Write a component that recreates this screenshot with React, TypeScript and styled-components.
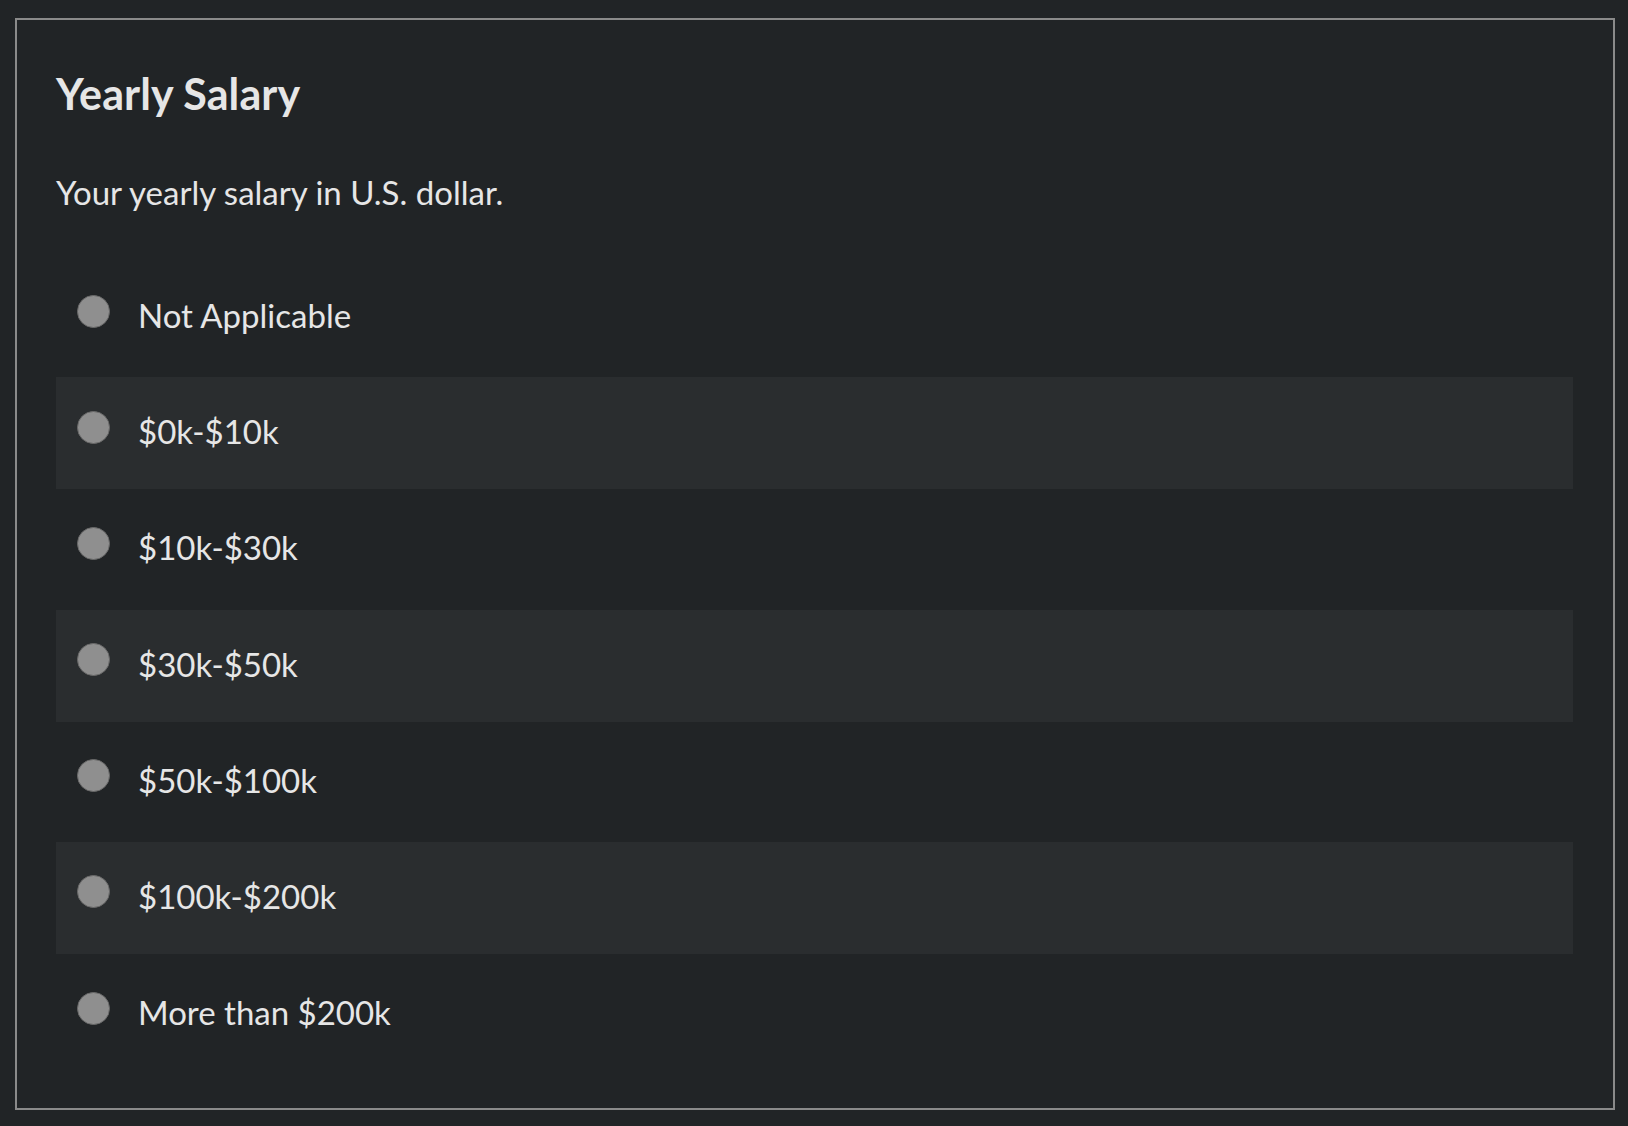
import React, { useState } from 'react';
import styled, { createGlobalStyle } from 'styled-components';

const color = {
  page: '#212426',
  rowAlt: '#2a2d2f',
  frame: '#8a8a8a',
  text: '#e6e6e6',
  radio: '#8f8f8f',
  radioEdge: '#6a6a6a',
};

const GlobalStyle = createGlobalStyle`
  html, body {
    margin: 0;
    padding: 0;
    background-color: ${color.page};
  }
  body {
    font-family: Lato, "Open Sans", "Noto Sans", sans-serif;
    color: ${color.text};
  }
`;

const Page = styled.div`
  padding: 18px 13px 16px 15px;
`;

const Frame = styled.fieldset`
  margin: 0;
  box-sizing: border-box;
  width: 1600px;
  min-height: 1092px;
  border: solid 2px ${color.frame};
  padding: 50px 40px 38px 39px;
`;

const Title = styled.h2`
  margin: 0;
  font-size: 43px;
  font-weight: 700;
  line-height: 48px;
  letter-spacing: 0.1px;
  color: ${color.text};
`;

const Description = styled.p`
  margin: 55px 0 0;
  font-size: 33px;
  font-weight: 400;
  line-height: 38px;
  color: ${color.text};
`;

const OptionList = styled.div`
  display: flex;
  flex-direction: column;
  gap: 4.2px;
  margin-top: 50px;
`;

type OptionRowProps = {
  striped?: boolean;
};

const OptionRow = styled.label<OptionRowProps>`
  display: flex;
  align-items: center;
  height: 112px;
  padding-left: 21px;
  cursor: pointer;
  background-color: ${(props) => (props.striped ? color.rowAlt : 'transparent')};
`;

const RadioInput = styled.input`
  appearance: none;
  flex: none;
  box-sizing: border-box;
  width: 33px;
  height: 33px;
  margin: 0 28px 12px 0;
  border-radius: 50%;
  border: solid 1.5px ${color.radioEdge};
  background-color: ${color.radio};
  cursor: pointer;

  &:checked {
    background-color: ${color.text};
    box-shadow: inset 0 0 0 8px ${color.radio};
  }
`;

const OptionText = styled.span`
  margin-bottom: 4px;
  font-size: 33px;
  line-height: 38px;
  color: ${color.text};
`;

const options = [
  'Not Applicable',
  '$0k-$10k',
  '$10k-$30k',
  '$30k-$50k',
  '$50k-$100k',
  '$100k-$200k',
  'More than $200k',
];

const App: React.FC = () => {
  const [selected, setSelected] = useState<number>(-1);

  return (
    <>
      <GlobalStyle />
      <Page>
        <Frame>
          <Title>Yearly Salary</Title>
          <Description>Your yearly salary in U.S. dollar.</Description>
          <OptionList>
            {options.map((option, index) => (
              <OptionRow key={option} striped={index % 2 === 1}>
                <RadioInput
                  type='radio'
                  name='yearly-salary'
                  checked={selected === index}
                  onChange={() => setSelected(index)}
                />
                <OptionText>{option}</OptionText>
              </OptionRow>
            ))}
          </OptionList>
        </Frame>
      </Page>
    </>
  );
};

export default App;
